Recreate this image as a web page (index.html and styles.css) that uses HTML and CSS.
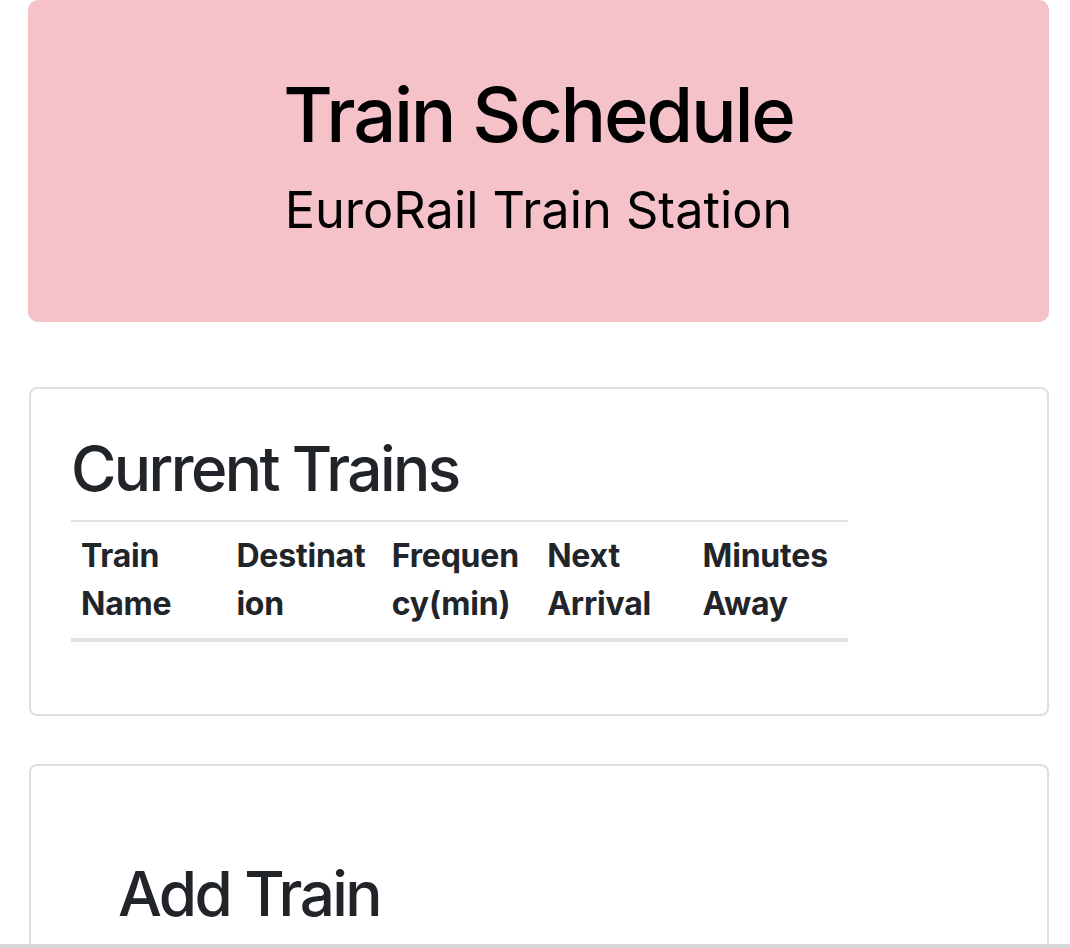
FILE: index.html
```html
<!DOCTYPE html>
<html lang="en">
<head>
<meta charset="utf-8">
<title>Train Schedule</title>
<link rel="stylesheet" href="styles.css">
</head>
<body>
<div class="container">
  <header class="jumbotron">
    <h1 class="title">Train Schedule</h1>
    <h3 class="subtitle">EuroRail Train Station</h3>
  </header>

  <section class="card">
    <div class="card-body">
      <h2 class="card-title">Current Trains</h2>
      <table class="trains">
        <thead>
          <tr>
            <th>Train Name</th>
            <th>Destination</th>
            <th>Frequency(min)</th>
            <th>Next Arrival</th>
            <th>Minutes Away</th>
          </tr>
        </thead>
        <tbody></tbody>
      </table>
    </div>
  </section>

  <section class="card card-add">
    <div class="card-body">
      <div class="add-inner">
        <h2 class="card-title">Add Train</h2>
      </div>
    </div>
  </section>
</div>
<div class="window-edge"></div>
</body>
</html>
```

FILE: styles.css
```css
* { box-sizing: border-box; }

html, body {
  margin: 0;
  padding: 0;
  background: #ffffff;
}

body {
  font-family: Inter, "Noto Sans", "Liberation Sans", sans-serif;
  color: #212529;
  font-size: 32px;
  line-height: 1.5;
}

.container {
  padding: 0 21px 0 28px;
}

.jumbotron {
  background: #f5c2ca;
  border-radius: 10px;
  padding: 66px 32px 66px;
  margin-bottom: 65px;
  text-align: center;
  color: #000;
}

.title {
  margin: 0 0 18px;
  font-size: 76px;
  font-weight: 500;
  line-height: 96px;
  letter-spacing: -2.3px;
}

.subtitle {
  margin: 0 0 16px;
  font-size: 50.5px;
  font-weight: 400;
  line-height: 60px;
  letter-spacing: 0;
}

.card {
  border: 2px solid #dfdfdf;
  border-radius: 8px;
  background: #fff;
  margin-left: 1px;
}

.card + .card {
  margin-top: 48px;
}

.card-body {
  padding: 40px;
}

.card-title {
  margin: 0 0 12px;
  font-size: 62px;
  font-weight: 500;
  line-height: 79px;
  letter-spacing: -2.6px;
}

.trains {
  width: 777px;
  table-layout: fixed;
  border-collapse: collapse;
  margin-bottom: 32px;
}

.trains th {
  text-align: left;
  vertical-align: bottom;
  font-weight: 700;
  padding: 10px;
  border-top: 2px solid #dee2e6;
  border-bottom: 4px solid #dee2e6;
  overflow-wrap: break-word;
  word-wrap: break-word;
  line-height: 48px;
  letter-spacing: -0.2px;
}

.add-inner {
  padding: 48px 47px 0;
  height: 200px;
}

.window-edge {
  position: fixed;
  left: 0;
  right: 0;
  bottom: 0;
  height: 4px;
  background: #d8d8d8;
}
```
